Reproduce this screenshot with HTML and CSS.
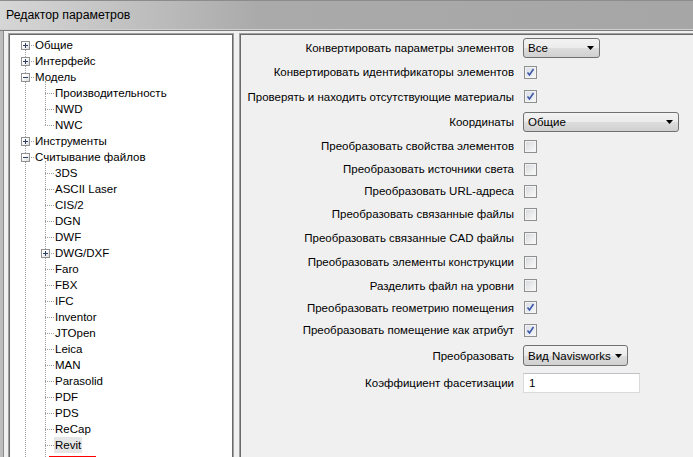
FILE: index.html
```html
<!DOCTYPE html>
<html lang="ru">
<head>
  <meta charset="UTF-8">
  <title>Редактор параметров</title>
  <link rel="stylesheet" href="styles.css">
</head>
<body>
  <div class="window">
    <div class="titlebar">Редактор параметров</div>

    <div class="client">
      <!-- Left: category tree -->
      <div class="panel tree-panel">
        <div class="tree">
          <div class="node l1"><span class="twisty"><span class="exp plus"></span></span><span class="label">Общие</span></div>
          <div class="node l1"><span class="twisty"><span class="exp plus"></span></span><span class="label">Интерфейс</span></div>
          <div class="node l1"><span class="twisty"><span class="exp minus"></span></span><span class="label">Модель</span></div>
          <div class="group">
            <div class="node l2"><span class="twisty"></span><span class="label">Производительность</span></div>
            <div class="node l2"><span class="twisty"></span><span class="label">NWD</span></div>
            <div class="node l2"><span class="twisty"></span><span class="label">NWC</span></div>
          </div>
          <div class="node l1"><span class="twisty"><span class="exp plus"></span></span><span class="label">Инструменты</span></div>
          <div class="node l1"><span class="twisty"><span class="exp minus"></span></span><span class="label">Считывание файлов</span></div>
          <div class="group open">
            <div class="node l2"><span class="twisty"></span><span class="label">3DS</span></div>
            <div class="node l2"><span class="twisty"></span><span class="label">ASCII Laser</span></div>
            <div class="node l2"><span class="twisty"></span><span class="label">CIS/2</span></div>
            <div class="node l2"><span class="twisty"></span><span class="label">DGN</span></div>
            <div class="node l2"><span class="twisty"></span><span class="label">DWF</span></div>
            <div class="node l2"><span class="twisty"><span class="exp plus"></span></span><span class="label">DWG/DXF</span></div>
            <div class="node l2"><span class="twisty"></span><span class="label">Faro</span></div>
            <div class="node l2"><span class="twisty"></span><span class="label">FBX</span></div>
            <div class="node l2"><span class="twisty"></span><span class="label">IFC</span></div>
            <div class="node l2"><span class="twisty"></span><span class="label">Inventor</span></div>
            <div class="node l2"><span class="twisty"></span><span class="label">JTOpen</span></div>
            <div class="node l2"><span class="twisty"></span><span class="label">Leica</span></div>
            <div class="node l2"><span class="twisty"></span><span class="label">MAN</span></div>
            <div class="node l2"><span class="twisty"></span><span class="label">Parasolid</span></div>
            <div class="node l2"><span class="twisty"></span><span class="label">PDF</span></div>
            <div class="node l2"><span class="twisty"></span><span class="label">PDS</span></div>
            <div class="node l2"><span class="twisty"></span><span class="label">ReCap</span></div>
            <div class="node l2 marked"><span class="twisty"></span><span class="label selected">Revit</span></div>
          </div>
        </div>
      </div>

      <!-- Right: options for the selected reader -->
      <div class="panel form-panel">
        <div class="form">
          <div class="caption">Конвертировать параметры элементов</div>
          <div class="ctl"><div class="combo w-all"><span>Все</span><svg width="7" height="4"><polygon points="0,0 7,0 3.5,4" fill="#000"/></svg></div></div>

          <div class="caption">Конвертировать идентификаторы элементов</div>
          <div class="ctl"><span class="check on"><svg width="11" height="11"><polyline points="2.5,5.5 4.5,8 8.5,2" fill="none" stroke="#3b57a6" stroke-width="1.6"/></svg></span></div>

          <div class="caption">Проверять и находить отсутствующие материалы</div>
          <div class="ctl"><span class="check on"><svg width="11" height="11"><polyline points="2.5,5.5 4.5,8 8.5,2" fill="none" stroke="#3b57a6" stroke-width="1.6"/></svg></span></div>

          <div class="caption">Координаты</div>
          <div class="ctl"><div class="combo w-coord"><span>Общие</span><svg width="7" height="4"><polygon points="0,0 7,0 3.5,4" fill="#000"/></svg></div></div>

          <div class="caption">Преобразовать свойства элементов</div>
          <div class="ctl"><span class="check"></span></div>

          <div class="caption">Преобразовать источники света</div>
          <div class="ctl"><span class="check"></span></div>

          <div class="caption">Преобразовать URL-адреса</div>
          <div class="ctl"><span class="check"></span></div>

          <div class="caption">Преобразовать связанные файлы</div>
          <div class="ctl"><span class="check"></span></div>

          <div class="caption">Преобразовать связанные CAD файлы</div>
          <div class="ctl"><span class="check"></span></div>

          <div class="caption">Преобразовать элементы конструкции</div>
          <div class="ctl"><span class="check"></span></div>

          <div class="caption">Разделить файл на уровни</div>
          <div class="ctl"><span class="check"></span></div>

          <div class="caption">Преобразовать геометрию помещения</div>
          <div class="ctl"><span class="check on"><svg width="11" height="11"><polyline points="2.5,5.5 4.5,8 8.5,2" fill="none" stroke="#3b57a6" stroke-width="1.6"/></svg></span></div>

          <div class="caption">Преобразовать помещение как атрибут</div>
          <div class="ctl"><span class="check on"><svg width="11" height="11"><polyline points="2.5,5.5 4.5,8 8.5,2" fill="none" stroke="#3b57a6" stroke-width="1.6"/></svg></span></div>

          <div class="caption">Преобразовать</div>
          <div class="ctl"><div class="combo w-view"><span>Вид Navisworks</span><svg width="7" height="4"><polygon points="0,0 7,0 3.5,4" fill="#000"/></svg></div></div>

          <div class="caption">Коэффициент фасетизации</div>
          <div class="ctl"><div class="field">1</div></div>
        </div>
      </div>
    </div>
  </div>
</body>
</html>
```

FILE: styles.css
```css
* {
  box-sizing: border-box;
}
html, body {
  margin: 0;
  height: 100%;
}
body {
  font-family: "Liberation Sans", Arial, sans-serif;
  font-size: 11.5px;
  color: #000;
  background: #f0f0f0;
  overflow: hidden;
}
.window {
  height: 457px;
  display: flex;
  flex-direction: column;
}
/* Window caption (Win7 basic look) */
.titlebar {
  height: 31px;
  flex: none;
  display: flex;
  align-items: center;
  padding: 0 0 2px 6px;
  font-size: 12.3px;
  background: linear-gradient(90deg, #d6d6d6 0, #c4c4c4 110px, #aaaaaa 260px, #a6a6a6 100%);
  border-top: 1px solid #8c8c8c;
  border-bottom: 1px solid #7c7c7c;
  box-shadow: inset 0 -1px 0 #cfcfcf;
}
.client {
  flex: 1;
  min-height: 0;
  display: flex;
  gap: 5px;
  padding: 2px 0 0 5px;
  border-left: 3px solid #bdbdbd;
  box-shadow: inset 1px 0 0 #8a8a8a;
}
.panel {
  border: 1px solid #a0a0a0;
  border-bottom: none;
  box-shadow: inset 1px 1px 0 #6a6a6a, inset -1px 0 0 #6a6a6a;
  overflow: hidden;
}
/* Tree */
.tree-panel {
  width: 226px;
  flex: none;
  background: #fff;
  padding: 3px 2px 0 2px;
}
.tree {
  position: relative;
  height: 100%;
}
.tree::before {
  content: "";
  position: absolute;
  left: 14px;
  top: 8px;
  bottom: -10px;
  border-left: 1px dotted #a0a0a0;
}
.node {
  position: relative;
  display: flex;
  height: 16px;
  line-height: 16px;
  white-space: nowrap;
}
.node.l1 {
  padding-left: 5px;
}
.node.l2 {
  padding-left: 25px;
}
.twisty {
  position: relative;
  width: 18px;
  height: 16px;
  flex: none;
}
.twisty::after {
  content: "";
  position: absolute;
  left: 9px;
  right: 0;
  top: 8px;
  border-top: 1px dotted #a0a0a0;
}
.exp {
  position: absolute;
  z-index: 1;
  left: 5px;
  top: 4px;
  width: 9px;
  height: 9px;
  border: 1px solid #919191;
  background: linear-gradient(135deg, #ffffff 30%, #dcdcdc);
}
.exp::before {
  content: "";
  position: absolute;
  left: 1px;
  top: 3px;
  width: 5px;
  height: 1px;
  background: #2d3f63;
}
.exp.plus::after {
  content: "";
  position: absolute;
  left: 3px;
  top: 1px;
  width: 1px;
  height: 5px;
  background: #2d3f63;
}
.label {
  padding: 0 1px;
}
.label.selected {
  background: #e6e6e6;
}
.group {
  position: relative;
}
.group::before {
  content: "";
  position: absolute;
  left: 34px;
  top: -4px;
  bottom: 8px;
  border-left: 1px dotted #a0a0a0;
}
.group.open::before {
  bottom: -12px;
}
/* red annotation under the selected reader */
.node.marked::after {
  content: "";
  position: absolute;
  left: 38px;
  top: 19px;
  width: 47px;
  height: 2px;
  background: #ff0000;
}
/* Options form */
.form-panel {
  flex: 1;
  margin-right: -10px;
  background: #f0f0f0;
  padding-top: 1px;
  padding-left: 2px;
}
.form {
  display: grid;
  grid-template-columns: 272px auto;
  grid-template-rows: 25px 24px 25px 25px 24px 22px 22px 24px 24px 24px 23px 21px 24px 27px 27px;
  column-gap: 9px;
  align-items: center;
}
.caption {
  text-align: right;
  white-space: nowrap;
}
.ctl {
  display: flex;
  align-items: center;
}
.check {
  width: 13px;
  height: 13px;
  margin-left: 1px;
  border: 1px solid #8e8f8f;
  background: linear-gradient(135deg, #d4d7dc 0, #f3f3f3 75%, #fcfcfc 100%);
  box-shadow: inset 0 0 0 1px #f4f4f4;
  display: flex;
}
.check.on {
  background: linear-gradient(135deg, #d9dde6 0, #eef0f4 75%, #f8f8f8 100%);
}
.combo {
  height: 20px;
  display: flex;
  align-items: center;
  justify-content: space-between;
  padding: 0 5px 0 4px;
  border: 1px solid #707070;
  border-radius: 3px;
  background: linear-gradient(#f3f3f3 0, #ebebeb 50%, #dddddd 50%, #d0d0d0 100%);
  white-space: nowrap;
}
.w-all {
  width: 77px;
}
.w-coord {
  width: 156px;
}
.w-view {
  width: 105px;
  height: 21px;
}
.field {
  width: 117px;
  height: 20px;
  line-height: 18px;
  padding-left: 5px;
  background: #fff;
  border: 1px solid #dadada;
  border-top-color: #bfc1c6;
}
```
